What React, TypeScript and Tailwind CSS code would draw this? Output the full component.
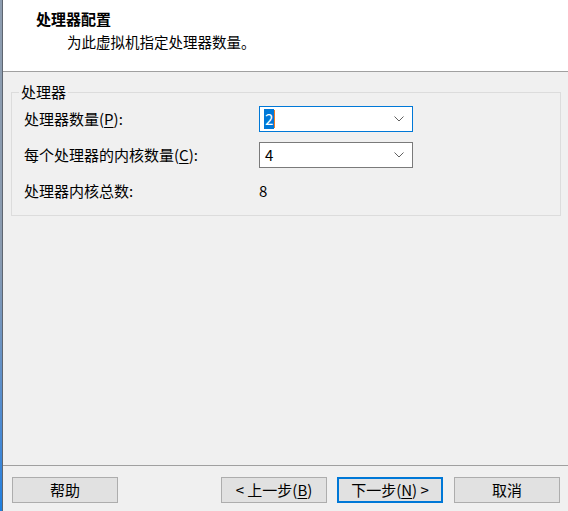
import React from "react";

const font = { fontFamily: '"Noto Sans CJK SC", "Microsoft YaHei", sans-serif' };

function Chevron(): JSX.Element {
    return (
        <svg width="10" height="6" viewBox="0 0 10 6" className="shrink-0">
            <path d="M0.5 0.5 L5 5 L9.5 0.5" fill="none" stroke="#606060" strokeWidth="1" />
        </svg>
    );
}

function Combo({ value, focused }: { value: string; focused?: boolean }): JSX.Element {
    return (
        <div
            className={`flex items-center w-[154px] h-[26px] bg-white border pl-[4px] pr-[6px] ${
                focused ? "border-[#0078d7]" : "border-[#7a7a7a]"
            }`}
        >
            {focused ? (
                <span className="flex items-center h-[20px]">
                    <span className="bg-[#0078d7] text-white px-[1px] leading-[20px]">{value}</span>
                    <span className="w-[1px] h-[18px] bg-[#f07b22]" />
                </span>
            ) : (
                <span className="leading-[20px] px-[1px]">{value}</span>
            )}
            <span className="ml-auto mr-[2px]">
                <Chevron />
            </span>
        </div>
    );
}

function Button({ children, primary }: { children: React.ReactNode; primary?: boolean }): JSX.Element {
    return (
        <button
            className={`h-[26px] w-[106px] flex items-center justify-center bg-[#e1e1e1] text-[15px] text-black ${
                primary ? "border-2 border-[#0078d7] w-[106px]" : "border border-[#adadad]"
            }`}
        >
            {children}
        </button>
    );
}

export default function App(): JSX.Element {
    return (
        <div className="flex w-[568px] h-[511px] overflow-hidden text-[15px] text-black" style={font}>
            <div className="w-[2px] h-full bg-gradient-to-b from-[#8d9db0] via-[#8a9bb0] to-[#1c7fe0]" />
            <div className="w-[1px] h-full bg-[#5f6670]" />
            <div className="flex flex-col flex-1 bg-[#f0f0f0]">
                <div className="h-[72px] bg-white border-b border-[#a0a0a0] pt-[9px] pl-[33px]">
                    <div className="font-bold text-[15px] leading-[20px]">处理器配置</div>
                    <div className="pl-[31px] mt-[3px] text-[14.5px] leading-[20px]">为此虚拟机指定处理器数量。</div>
                </div>

                <div className="flex-1 pt-[20px] pl-[8px] pr-[7px]">
                    <div className="relative border border-[#dcdcdc] h-[124px] pt-[13px] pl-[12px]">
                        <span className="absolute -top-[11px] left-[7px] px-[2px] bg-[#f0f0f0] leading-[20px]">处理器</span>
                        <div className="flex flex-col gap-[10px]">
                            <div className="flex items-center h-[26px]">
                                <span className="w-[235px]">
                                    处理器数量(<span className="underline underline-offset-2">P</span>):
                                </span>
                                <Combo value="2" focused />
                            </div>
                            <div className="flex items-center h-[26px]">
                                <span className="w-[235px]">
                                    每个处理器的内核数量(<span className="underline underline-offset-2">C</span>):
                                </span>
                                <Combo value="4" />
                            </div>
                            <div className="flex items-center h-[26px]">
                                <span className="w-[235px]">处理器内核总数:</span>
                                <span>8</span>
                            </div>
                        </div>
                    </div>
                </div>

                <div className="h-[46px] border-t border-[#a0a0a0] flex items-start pt-[11px] pl-[9px] pr-[8px]">
                    <Button>帮助</Button>
                    <div className="ml-auto flex">
                        <Button>
                            &lt; 上一步(<span className="underline underline-offset-2">B</span>)
                        </Button>
                        <div className="w-[10px]" />
                        <Button primary>
                            下一步(<span className="underline underline-offset-2">N</span>) &gt;
                        </Button>
                        <div className="w-[11px]" />
                        <Button>取消</Button>
                    </div>
                </div>
            </div>
        </div>
    );
}
